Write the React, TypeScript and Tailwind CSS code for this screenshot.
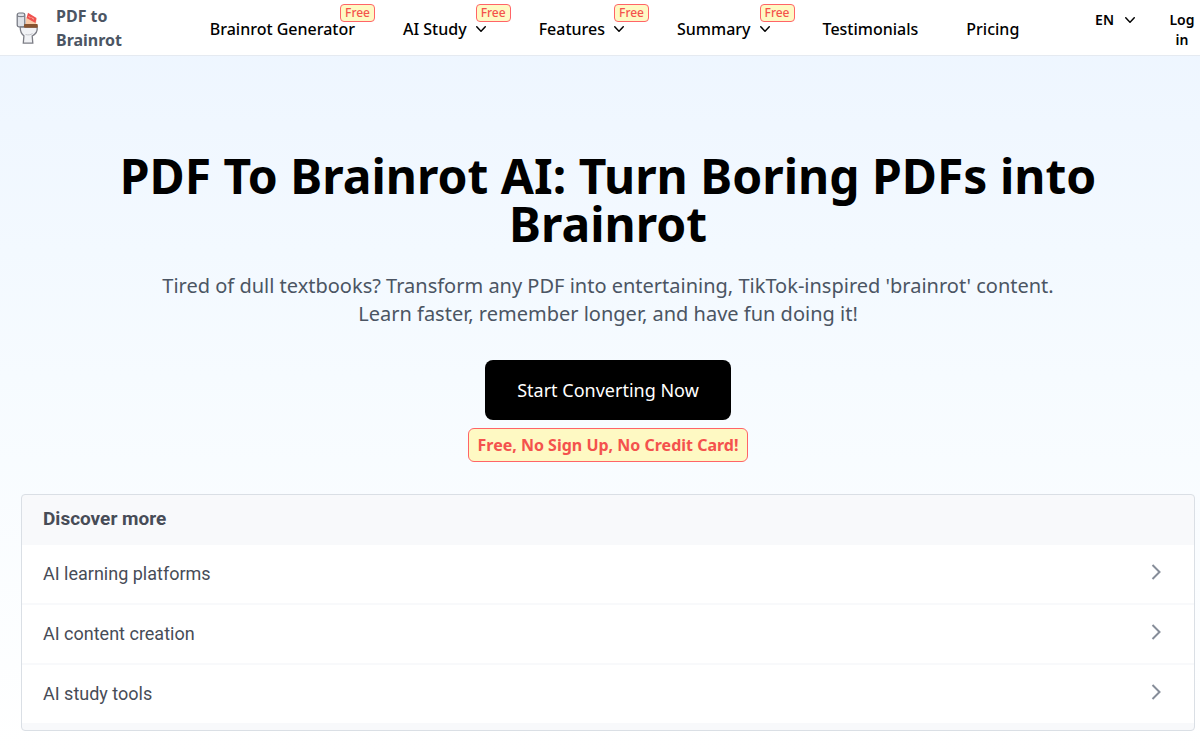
const navItems = [
  { label: 'Brainrot Generator', free: true, menu: false },
  { label: 'AI Study', free: true, menu: true },
  { label: 'Features', free: true, menu: true },
  { label: 'Summary', free: true, menu: true },
  { label: 'Testimonials', free: false, menu: false },
  { label: 'Pricing', free: false, menu: false },
];

const topics = ['AI learning platforms', 'AI content creation', 'AI study tools'];

function ChevronDown() {
  return (
    <svg viewBox="0 0 20 20" fill="currentColor" className="size-5" aria-hidden="true">
      <path d="M5.23 7.21a.75.75 0 011.06.02L10 11.168l3.71-3.938a.75.75 0 111.08 1.04l-4.25 4.5a.75.75 0 01-1.08 0l-4.25-4.5a.75.75 0 01.02-1.06z" />
    </svg>
  );
}

function Logo() {
  return (
    <svg viewBox="0 0 24 34" className="h-[34px] w-6 shrink-0" aria-hidden="true">
      <path d="M9.500 14 10 7.500 13 3.500 20.500 8 20 14Z" fill="#f9c9a6" />
      <path d="M12 1.800 20.500 7 19.500 12 10.500 7Z" fill="#f0524f" />
      <path d="M12.500 5.500l2 1M15.500 6.500l2.500 1.800" stroke="#fbb4a8" strokeWidth="1" />
      <rect x="1.200" y="2" width="7.600" height="14" rx="2" fill="#dfe2e8" stroke="#6f727c" strokeWidth="1.200" />
      <path d="M1.500 5c2 .9 5 .9 7 0" fill="none" stroke="#6f727c" strokeWidth="1" />
      <path d="M4.200 16h17c.5 4.800-1.800 7.400-5 9l.6 7.200H7.300l.6-7.400C5.400 23 4.200 20 4.200 16Z" fill="#f1f2f5" stroke="#7c7d85" strokeWidth="1.300" />
      <path d="M9.500 23.500c3 .8 5 .4 7-1" fill="none" stroke="#b4b6bd" strokeWidth=".8" />
      <rect x="8" y="13" width="13.800" height="3.800" rx="1" fill="#88532f" />
    </svg>
  );
}

function ChevronRight() {
  return (
    <svg viewBox="0 0 24 24" className="size-6" fill="none" stroke="#868d99" strokeWidth="2" aria-hidden="true">
      <path d="M8.500 5l7 7-7 7" />
    </svg>
  );
}

export default function App() {
  return (
    <div className="min-h-screen overflow-x-hidden bg-linear-to-b/srgb from-[#edf5ff] via-[#f6fbff] to-white font-['Noto_Sans',sans-serif] text-black">
      <header className="flex h-14 items-start justify-between border-b border-[#e5eaf1] bg-white pl-4">
        <a href="#" className="flex w-[118px] items-center gap-4 pt-1 font-bold text-[#4b5563]">
          <Logo />
          <span>PDF to Brainrot</span>
        </a>
        <nav className="flex gap-12 pt-[17px] font-medium">
          {navItems.map((item) => {
            const badge = item.free && (
              <span className="absolute -top-[13px] -right-5 rounded-sm border border-red-400 bg-[#fef9c3] px-1 text-xs font-medium text-[#f4524d]">
                Free
              </span>
            );
            return item.menu ? (
              <button key={item.label} type="button" className="relative flex items-center gap-1 whitespace-nowrap">
                {item.label}
                <ChevronDown />
                {badge}
              </button>
            ) : (
              <a key={item.label} href="#" className="relative whitespace-nowrap">
                {item.label}
                {badge}
              </a>
            );
          })}
        </nav>
        <div className="flex items-start gap-6 pt-2.5 text-sm font-semibold">
          <button type="button" className="flex items-center gap-1.5">
            EN
            <ChevronDown />
          </button>
          <a href="#" className="w-9 px-1 text-center">
            Log in
          </a>
        </div>
      </header>

      <main className="pt-24 pr-[5px] pb-5 pl-[21px] text-center">
        <section className="mx-auto flex max-w-5xl flex-col items-center">
          <h1 className="text-5xl leading-none font-bold">PDF To Brainrot AI: Turn Boring PDFs into Brainrot</h1>
          <p className="mt-6 max-w-4xl text-xl leading-7 text-[#4b5563]">
            Tired of dull textbooks? Transform any PDF into entertaining, TikTok-inspired 'brainrot' content. Learn
            faster, remember longer, and have fun doing it!
          </p>
          <button type="button" className="mt-8 rounded-lg bg-black px-8 py-4 text-lg leading-7 text-white">
            Start Converting Now
          </button>
          <span className="mt-2 rounded-md border border-red-400 bg-[#fef9c3] px-[9px] py-1 font-bold text-[#f4524d]">
            Free, No Sign Up, No Credit Card!
          </span>
        </section>

        <section className="mt-8 rounded-sm border border-[#dadfe5] bg-[#f8f9fb] pb-[7px] text-left font-['Roboto',sans-serif] text-lg text-[#474c57]">
          <h2 className="flex h-[50px] items-center px-[21px] pb-0.5 text-[19px] font-bold">Discover more</h2>
          <ul className="flex flex-col gap-0.5">
            {topics.map((topic) => (
              <li key={topic}>
                <a href="#" className="flex h-[58px] items-start justify-between bg-white pt-[15px] pr-[26px] pl-[21px]">
                  {topic}
                  <ChevronRight />
                </a>
              </li>
            ))}
          </ul>
        </section>
      </main>
    </div>
  );
}
